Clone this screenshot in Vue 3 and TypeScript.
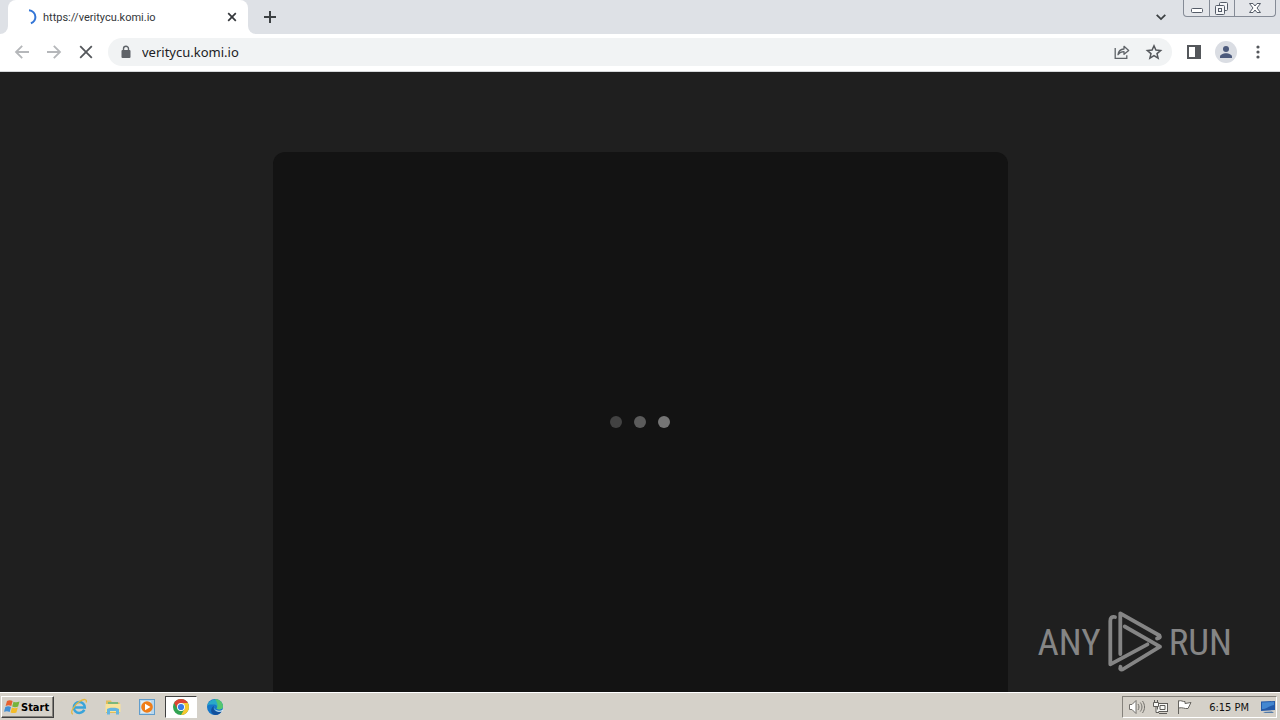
<script setup lang="ts">
import { ref } from 'vue'

const address = ref('veritycu.komi.io')
const tabTitle = 'https://veritycu.komi.io'
const dots: string[] = ['dim', 'mid', 'bright']
</script>

<template>
  <div class="desktop">
    <header class="tabstrip">
      <div class="edge"></div>
      <div class="tab">
        <svg class="spinner" width="16" height="16" viewBox="0 0 16 16" fill="none" stroke="#3375d6" stroke-width="2"><path d="M8 1.3c3.500.2 6.400 3 6.400 6.700 0 3-1.800 5.300-4.500 6.300" /></svg>
        <span class="tab-title">{{ tabTitle }}</span>
        <button class="plain tab-close" aria-label="Close tab">
          <svg width="16" height="16" viewBox="0 0 16 16" stroke="#34373b" stroke-width="1.7"><path d="m4.2 4.2 7.6 7.6m0-7.6-7.6 7.6" /></svg>
        </button>
      </div>
      <div class="strip-rest">
        <button class="plain new-tab" aria-label="New tab">
          <svg width="16" height="16" viewBox="0 0 16 16" stroke="#3c4043" stroke-width="2"><path d="M8 2v12M2 8h12" /></svg>
        </button>
        <button class="plain tab-search" aria-label="Search tabs">
          <svg width="16" height="16" viewBox="0 0 16 16" fill="none" stroke="#3c4043" stroke-width="1.8"><path d="m3.7 5.8 4.3 4.3 4.3-4.3" /></svg>
        </button>
        <div class="window-controls">
          <button class="plain" aria-label="Minimize">
            <svg width="24" height="16" viewBox="0 0 24 16" fill="#fff" stroke="#555c68"><rect x="6.5" y="8.5" width="11" height="4" rx="1" /></svg>
          </button>
          <button class="plain" aria-label="Restore">
            <svg width="24" height="16" viewBox="0 0 24 16" fill="#f4f5f7" stroke="#555c68"><rect x="9.5" y="2.5" width="8" height="8" rx="1" /><rect x="5.5" y="5.5" width="9" height="9" rx="1" /><rect x="8.5" y="8.5" width="3" height="3" /></svg>
          </button>
          <button class="plain wide" aria-label="Close">
            <svg width="24" height="16" viewBox="0 0 24 16" fill="#fff" stroke="#555c68"><path d="M6.500 3.500h3.500l2 2.500 2-2.500h3.500l-3.500 4.500 3.500 4.500h-3.500l-2-2.500-2 2.500h-3.500l3.500-4.500z" /></svg>
          </button>
        </div>
      </div>
    </header>

    <nav class="toolbar" aria-label="Browser toolbar">
      <button class="plain tool" aria-label="Back"><svg width="20" height="20" viewBox="0 0 20 20" fill="none" stroke="#b5b7ba" stroke-width="1.8"><path d="M17 10H4m6.200-6.200L4 10l6.200 6.200" /></svg></button>
      <button class="plain tool" aria-label="Forward"><svg width="20" height="20" viewBox="0 0 20 20" fill="none" stroke="#b5b7ba" stroke-width="1.8"><path d="M3 10h13M9.800 3.800 16 10l-6.200 6.200" /></svg></button>
      <button class="plain tool" aria-label="Stop loading"><svg width="20" height="20" viewBox="0 0 20 20" fill="none" stroke="#54575b" stroke-width="1.8"><path d="m4.200 4.200 11.600 11.600m0-11.600L4.200 15.800" /></svg></button>
      <div class="omnibox">
        <svg width="16" height="16" viewBox="0 0 16 16"><rect x="3.5" y="6" width="9" height="8" rx="1" fill="#5f6368" /><path d="M5.500 6.500V4.700a2.500 2.500 0 0 1 5 0v1.800" fill="none" stroke="#5f6368" stroke-width="1.4" /></svg>
        <input v-model="address" class="address" type="text" aria-label="Address" spellcheck="false" />
        <button class="plain tool" aria-label="Share"><svg width="18" height="18" viewBox="0 0 18 18" fill="none" stroke="#5f6368" stroke-width="1.3"><path d="M2.200 5v10.300h11.600v-3" /><path d="M5 11.700c.4-4 2.600-5.500 6-5.700V3.300L15.700 7.400 11 11.300V8.700c-2.600 0-4.500.8-6 3z" stroke-linejoin="round" /></svg></button>
        <button class="plain tool" aria-label="Bookmark"><svg width="18" height="18" viewBox="0 0 18 18" fill="none" stroke="#54575b" stroke-width="1.5"><path d="m9 2.800 1.900 4.300 4.700.4-3.600 3.100 1.100 4.600L9 12.700l-4.100 2.500L6 10.600 2.400 7.500l4.700-.4z" /></svg></button>
      </div>
      <button class="plain tool" aria-label="Side panel"><svg width="16" height="16" viewBox="0 0 16 16"><path d="M1 1h14v14H1zm2 2v10h6V3z" fill="#54575b" fill-rule="evenodd" /></svg></button>
      <button class="plain tool" aria-label="Profile"><svg width="22" height="22" viewBox="0 0 22 22"><circle cx="11" cy="11" r="11" fill="#dadde3" /><circle cx="11" cy="8" r="3" fill="#4c5a7c" /><path d="M5 17v-1.500c0-2 3.500-3.300 6-3.300s6 1.300 6 3.300V17z" fill="#4c5a7c" /></svg></button>
      <button class="plain tool" aria-label="Menu"><svg width="16" height="16" viewBox="0 0 16 16" fill="#54575b"><circle cx="8" cy="3" r="1.6" /><circle cx="8" cy="8" r="1.6" /><circle cx="8" cy="13" r="1.6" /></svg></button>
    </nav>

    <main class="page">
      <section class="card" aria-label="Loading">
        <span v-for="dot in dots" :key="dot" class="dot" :class="dot"></span>
      </section>
      <div class="watermark">
        <span>ANY</span>
        <svg width="56" height="64" viewBox="0 0 56 64" fill="none" stroke="#858585" stroke-width="3.8" stroke-linecap="round" stroke-linejoin="round">
          <path d="M8 7 Q3.300 6 3.300 11V54.300L40.500 34.300" />
          <path d="M13.300 44V3.300L52.500 25.500Q54 28 50 28.500" />
          <path d="M17.700 16.500 53 36.700 15.500 59.500Q12.500 60 13.500 56.700" />
        </svg>
        <span>RUN</span>
      </div>
    </main>

    <footer class="taskbar">
      <button class="start">
        <svg width="17" height="16" viewBox="0 0 17 16"><path d="M3 2c2-1 4-.8 5.600.1L7.300 7C5.700 6 3.600 6 1.600 6.900z" fill="#e7602e" /><path d="M9.500 2.700c2 .9 4 .8 6-.2l-1.400 5c-2 .9-4 .9-5.900 0z" fill="#76b43c" /><path d="M1.300 7.900c2-.9 4-.9 5.700.1l-1.300 5c-1.800-1-3.700-1-5.700-.2z" fill="#438fd4" /><path d="M7.900 8.500c2 .9 3.900.9 5.900 0l-1.400 4.900c-1.900.9-3.900.9-5.800 0z" fill="#f4bc29" /></svg>
        <span>Start</span>
      </button>
      <div class="launchers">
        <button class="plain launcher" aria-label="Internet Explorer"><svg width="18" height="18" viewBox="0 0 18 18" fill="none"><path d="M14.300 11.800c-1 2-2.800 3.100-5 3.100a5.500 5.500 0 1 1 5.500-5.500H5" stroke="#39a4da" stroke-width="2.5" /><path d="M3 16C-.5 15.500 3.500 7.500 9.500 3.500 14 .6 17.300.8 16.200 4.500" stroke="#e5b841" stroke-width="1.3" /></svg></button>
        <button class="plain launcher" aria-label="File Explorer"><svg width="18" height="18" viewBox="0 0 18 18"><path d="M2 2.500h5l1 2h7.500V15H2z" fill="#e1bd5b" /><path d="M4 4h10v4H4z" fill="#7bb77b" /><path d="M1.500 6h15v8h-15z" fill="#f8e39a" /><path d="M3 16.500v-5c0-2.300 12-2.300 12 0v5h-3V13H6v3.500z" fill="#65b5df" /></svg></button>
        <button class="plain launcher" aria-label="Media Player"><svg width="18" height="18" viewBox="0 0 18 18"><rect x="1.5" y="1.5" width="15" height="15" fill="#b9d7ed" stroke="#619dcc" /><rect x="3" y="3" width="10" height="12" fill="#dcecf5" /><circle cx="9" cy="9" r="5.8" fill="#ef7d18" /><path d="m7 5.700 5.500 3.300L7 12.300z" fill="#fff" /></svg></button>
        <button class="plain launcher active" aria-label="Chrome"><svg width="18" height="18" viewBox="0 0 18 18"><circle cx="9" cy="9" r="8" fill="#32a352" /><path d="M2.100 5A8 8 0 0 1 15.900 5H9a4 4 0 0 0-3.500 6z" fill="#df4435" /><path d="M15.900 5A8 8 0 0 1 9 17l3.500-6A4 4 0 0 0 9 5z" fill="#f8c82e" /><circle cx="9" cy="9" r="4" fill="#fff" /><circle cx="9" cy="9" r="3.1" fill="#397be8" /></svg></button>
        <button class="plain launcher" aria-label="Edge"><svg width="18" height="18" viewBox="0 0 18 18"><circle cx="9" cy="9" r="8" fill="#1677c9" /><path d="M1.200 8A8 8 0 0 1 17 8.500c0 3-4.500 4-6.500 2 1.200-1.700.3-4-2.500-4-3 0-5.500-.5-6.800 1.500z" fill="#29a9c8" /><path d="M9 1c5 .1 8 3.700 8 7.500 0 3-4.500 4-6.500 2 2-2 1-6-1.500-9.500z" fill="#55c66f" /><path d="M8.200 8c-2 2.500.5 6 4.300 6 1.700 0 3-.6 3.700-1.500-1.200 2.700-3.700 4.500-7 4.500C4 16.500 4 9.500 8.200 8z" fill="#12509c" /><path d="M8.500 8c-1 1.800.5 4.600 4 4.800 1.500.1 3-.4 5-1.500l-.8 2C12 15 7 12.500 8.500 8z" fill="#dce8ec" /></svg></button>
      </div>
      <div class="tray">
        <svg width="18" height="16" viewBox="0 0 18 16" fill="none" stroke="#73716c"><path d="M1.500 5.500H4l4-4v13l-4-4H1.500z" fill="#fff" /><path d="M10 5c1.300 2 1.300 4 0 6M12.300 3.500c2.200 3 2.200 6 0 9M14.500 2c2.700 4 2.700 8 0 12" /></svg>
        <svg width="18" height="16" viewBox="0 0 18 16" fill="#f8f8f5" stroke="#5e5c58"><rect x="5.5" y="4.5" width="10" height="8" /><path d="M8 6.500h5v4H8zM7 14.500h8M2.500 1v3m3-3v3M1.500 3.500h5v4h-5zM4 7.500v6h3" /></svg>
        <svg width="18" height="16" viewBox="0 0 18 16" fill="#fff" stroke="#65635e"><path d="M2.500 15V1.500M2.500 2c3-1 4 .8 6.500.5v2l6-1-3 6c-4 .5-5-1.500-9.500-.5z" /></svg>
        <time class="clock">6:15 PM</time>
        <svg width="16" height="16" viewBox="0 0 16 16"><path d="M1 2.500 15 2v9L1 12z" fill="#2359a8" /><path d="m2 3.500 12-.5v3C9 6.500 7 10 2 10z" fill="#4387d0" /><path d="m3 13 9-.5 2 1.500H5z" fill="#537ba9" /></svg>
      </div>
    </footer>
  </div>
</template>

<style>
body { margin: 0; }
</style>

<style scoped>
* { box-sizing: border-box; }
.desktop {
  height: 100vh;
  display: flex;
  flex-direction: column;
  overflow: hidden;
  font-family: "DejaVu Sans Condensed", "Noto Sans", sans-serif;
}
svg { display: block; flex: none; }
.plain {
  display: flex;
  align-items: center;
  justify-content: center;
  padding: 0;
  border: 0;
  background: none;
}
.tabstrip { display: flex; flex: none; height: 34px; background: #fff; }
.edge { width: 8px; background: #dee1e6; border-bottom-right-radius: 8px; }
.tab {
  display: flex;
  align-items: center;
  width: 240px;
  padding: 0 8px 0 13px;
  background: linear-gradient(#dee1e6 50%, #fff 50%);
  position: relative;
  z-index: 0;
}
.tab::before { content: ""; position: absolute; inset: 0; z-index: -1; background: #fff; border-radius: 8px 8px 0 0; }
.tab-title {
  flex: 1;
  margin-left: 6px;
  font: 11px Roboto, sans-serif;
  color: #33363a;
  white-space: nowrap;
}
.strip-rest {
  flex: 1;
  display: flex;
  align-items: center;
  padding: 0 4px 0 14px;
  background: #dee1e6;
  border-bottom-left-radius: 8px;
}
.tab-search { margin-left: auto; margin-right: 14px; }
.window-controls {
  display: flex;
  align-self: flex-start;
  height: 17px;
  border: 1px solid #858b96;
  border-top: 0;
  border-radius: 0 0 4px 4px;
  background: #e3e5e9;
}
.window-controls button { width: 25px; }
.window-controls button + button { border-left: 1px solid #858b96; }
.window-controls .wide { width: 41px; }
.toolbar {
  display: flex;
  align-items: center;
  flex: none;
  height: 38px;
  padding: 0 6px 1px;
  background: #fff;
  border-bottom: 1px solid #d5d7da;
}
.tool { width: 32px; height: 28px; }
.omnibox {
  flex: 1;
  display: flex;
  align-items: center;
  height: 28px;
  margin: 0 6px;
  padding: 0 2px 0 10px;
  border-radius: 14px;
  background: #f1f3f4;
}
.address {
  flex: 1;
  min-width: 0;
  margin-left: 8px;
  padding: 0;
  border: 0;
  outline: 0;
  background: none;
  font: 13px "Noto Sans", sans-serif;
  color: #202124;
}
.page {
  position: relative;
  flex: 1;
  min-height: 0;
  display: flex;
  justify-content: center;
  padding-top: 80px;
  background: #1f1f1f;
}
.card {
  display: flex;
  justify-content: center;
  align-items: center;
  gap: 12px;
  width: 100%;
  max-width: 735px;
  background: #131313;
  border-radius: 12px 12px 0 0;
}
.dot { width: 12px; height: 12px; border-radius: 50%; }
.dim { background: #424242; }
.mid { background: #5b5b5b; }
.bright { background: #757575; }
.watermark {
  position: absolute;
  right: 48px;
  bottom: 18px;
  display: flex;
  align-items: center;
  gap: 6px;
  font: 37px "Roboto Condensed", "Liberation Sans Narrow", "Liberation Sans", sans-serif;
  color: #858585;
}
.taskbar {
  display: flex;
  align-items: center;
  flex: none;
  height: 28px;
  padding: 2px 3px 1px 1px;
  border-top: 1px solid #fff;
  background: #d5d1c9;
}
.start {
  display: flex;
  align-items: center;
  height: 22px;
  width: 53px;
  padding: 0 2px;
  border: 1px solid;
  border-color: #fff #404040 #404040 #fff;
  box-shadow: inset -1px -1px #85827c;
  background: #d5d1c9;
  font: bold 11px "DejaVu Sans Condensed", sans-serif;
  color: #000;
}
.launchers { display: flex; gap: 2px; margin-left: 9px; }
.launcher { width: 32px; height: 22px; }
.launcher.active {
  background: #fff;
  border: 1px solid;
  border-color: #404040 #fff #fff #404040;
}
.tray {
  display: flex;
  align-items: center;
  gap: 6px;
  height: 22px;
  margin-left: auto;
  padding: 0 0 0 5px;
  border: 1px solid;
  border-color: #85827c #fff #fff #85827c;
}
.clock { margin: 0 5px 0 9px; font-size: 11px; color: #111; white-space: nowrap; }
</style>
